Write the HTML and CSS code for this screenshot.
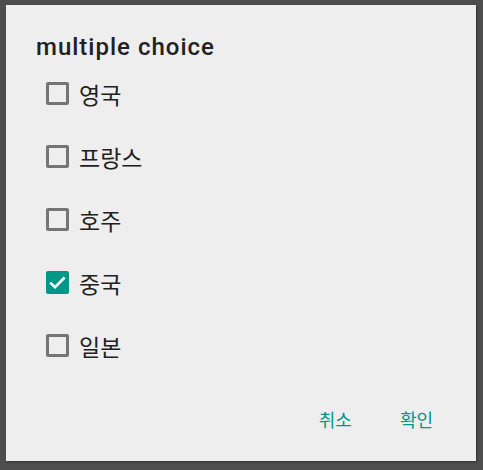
FILE: index.html
```html
<!DOCTYPE html>
<html lang="ko">
<head>
<meta charset="utf-8">
<link rel="stylesheet" href="styles.css">
</head>
<body>
<div class="dialog">
  <div class="title">multiple choice</div>
  <ul class="list">
    <li class="item"><span class="box"></span><span class="label">영국</span></li>
    <li class="item"><span class="box"></span><span class="label">프랑스</span></li>
    <li class="item"><span class="box"></span><span class="label">호주</span></li>
    <li class="item"><span class="box checked"><svg viewBox="0 0 23 23" width="23" height="23"><path d="M4.3 11.6L9 16.2L18.6 6.5" fill="none" stroke="#fff" stroke-width="2.7" stroke-linecap="butt"/></svg></span><span class="label">중국</span></li>
    <li class="item"><span class="box"></span><span class="label">일본</span></li>
  </ul>
  <div class="actions">
    <span class="btn">취소</span>
    <span class="btn">확인</span>
  </div>
</div>
</body>
</html>
```
FILE: styles.css
```css
html, body {
  margin: 0;
  padding: 0;
  background: #4d4d4d;
  width: 483px;
  height: 470px;
  overflow: hidden;
}
body {
  padding: 5px 0 0 6px;
  box-sizing: border-box;
  font-family: Roboto, "Noto Sans CJK KR", sans-serif;
}
.dialog {
  width: 470px;
  height: 456px;
  background: #eeeeee;
  box-sizing: border-box;
  padding: 27px 0 0 0;
  box-shadow: 1px 1px 2px rgba(0,0,0,0.35);
  display: flex;
  flex-direction: column;
}
.title {
  font-size: 24px;
  font-weight: 500;
  letter-spacing: 1px;
  color: #212121;
  line-height: 31px;
  padding-left: 30px;
}
.list {
  list-style: none;
  margin: 0;
  padding: 0;
}
.item {
  height: 63px;
  display: flex;
  align-items: center;
  padding-left: 40px;
}
.item:first-child {
  margin-top: -1px;
}
.box {
  width: 23px;
  height: 23px;
  box-sizing: border-box;
  border: 3px solid #757575;
  border-radius: 2px;
  display: flex;
  align-items: center;
  justify-content: center;
}
.box.checked {
  background: #009688;
  border: 0;
}
.label {
  margin-left: 10px;
  font-family: "Noto Sans CJK KR", sans-serif;
  font-size: 23px;
  color: #212121;
}
.actions {
  display: flex;
  justify-content: flex-end;
  gap: 48px;
  padding-right: 43px;
  margin-top: 29px;
}
.btn {
  font-family: "Noto Sans CJK KR", sans-serif;
  font-size: 18px;
  color: #009688;
}
```
